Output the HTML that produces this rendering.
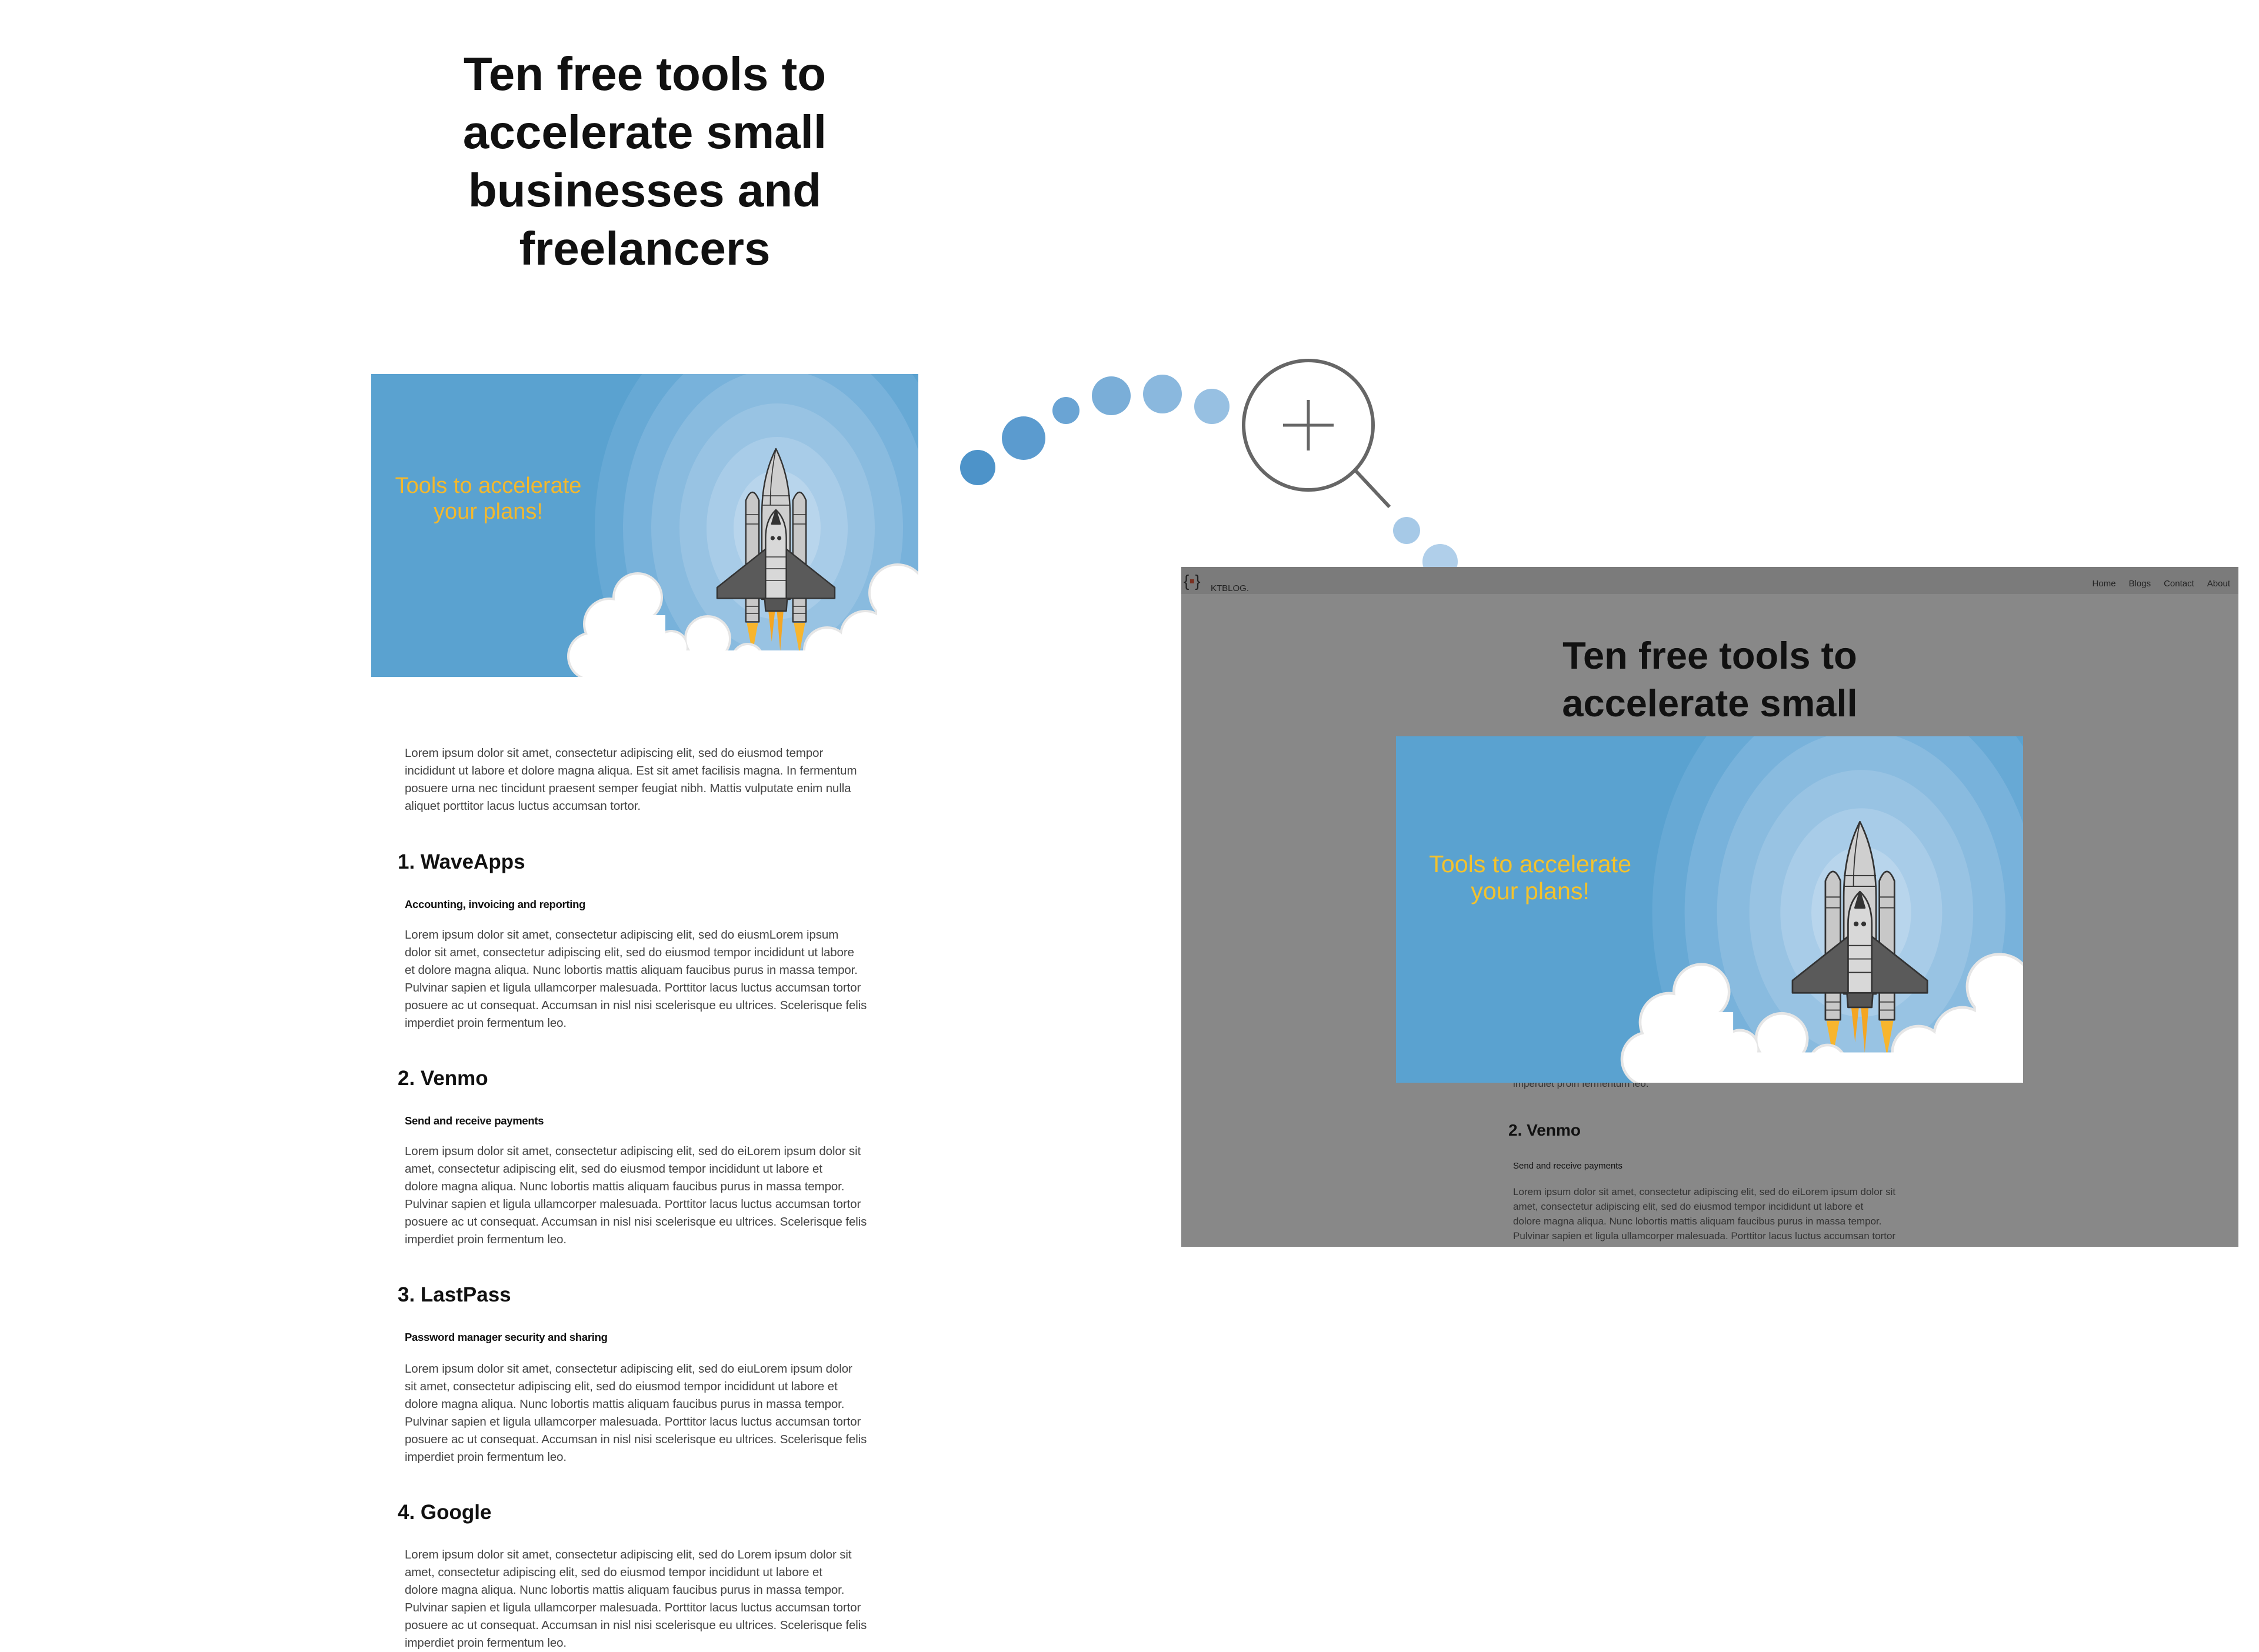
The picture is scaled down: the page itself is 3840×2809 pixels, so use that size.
<!DOCTYPE html>
<html><head><meta charset="utf-8">
<style>
html,body{margin:0;padding:0;background:#fff;}
body{width:3840px;height:2790px;position:relative;overflow:hidden;font-family:"Liberation Sans",sans-serif;}
.abs{position:absolute;}
.title{left:600px;width:992px;top:76px;text-align:center;font-weight:bold;font-size:80px;line-height:99px;color:#111;}
.p{position:absolute;left:688px;font-size:20.5px;line-height:30px;color:#444;white-space:nowrap;letter-spacing:-0.1px;}
.h{position:absolute;left:676px;font-size:35px;font-weight:bold;color:#111;line-height:40px;}
.s{position:absolute;left:688px;font-size:18.5px;color:#111;font-weight:bold;letter-spacing:-0.3px;}
</style></head><body>

<svg width="0" height="0" style="position:absolute">
<defs>
<symbol id="scene" viewBox="0 0 930 515">
<rect width="930" height="515" fill="#5aa2d0"/>
<g transform="translate(690,262)">
<ellipse rx="310" ry="390" fill="#67a9d5"/>
<ellipse rx="262" ry="330" fill="#78b2db"/>
<ellipse rx="214" ry="270" fill="#89bbdf"/>
<ellipse rx="166" ry="212" fill="#98c3e3"/>
<ellipse rx="120" ry="155" fill="#a8cce8"/>
<ellipse rx="74" ry="98" fill="#b8d5ec"/>
</g>
<g transform="translate(688,127) scale(0.8)" stroke="#333" stroke-width="3" stroke-linejoin="round">
<path d="M-16 345 L-9 410 L-2 345Z M2 345 L9 430 L16 345Z" fill="#f4a623" stroke="none"/>
<path d="M-62 370 L-50 435 L-38 370Z M38 370 L50 435 L62 370Z" fill="#f7b52d" stroke="none"/>
<path d="M-64 110 Q-50 75 -36 110 L-36 368 L-64 368Z" fill="#c8c8c8"/>
<path d="M36 110 Q50 75 64 110 L64 368 L36 368Z" fill="#c8c8c8"/>
<path d="M0 0 Q-30 60 -30 140 L-30 320 L30 320 L30 140 Q30 60 0 0Z" fill="#cfcfcf"/>
<path d="M0 0 Q-12 60 -12 120" fill="none" stroke-width="2"/>
<path d="M-18 210 L-125 295 L-125 318 L125 318 L125 295 L18 210Z" fill="#5a5a5a"/>
<path d="M0 130 Q-22 150 -22 190 L-22 330 L22 330 L22 190 Q22 150 0 130Z" fill="#d8d8d8"/>
<path d="M0 130 L-9 160 L9 160Z" fill="#333"/>
<path d="M-24 318 L-22 345 L22 345 L24 318Z" fill="#555"/>
<g stroke-width="2"><line x1="-30" y1="100" x2="30" y2="100"/><line x1="-30" y1="120" x2="30" y2="120"/><line x1="-64" y1="140" x2="-36" y2="140"/><line x1="36" y1="140" x2="64" y2="140"/><line x1="-64" y1="160" x2="-36" y2="160"/><line x1="36" y1="160" x2="64" y2="160"/><line x1="-22" y1="230" x2="22" y2="230"/><line x1="-22" y1="255" x2="22" y2="255"/><line x1="-22" y1="280" x2="22" y2="280"/><line x1="-64" y1="335" x2="-36" y2="335"/><line x1="36" y1="335" x2="64" y2="335"/><line x1="-64" y1="350" x2="-36" y2="350"/><line x1="36" y1="350" x2="64" y2="350"/></g>
<circle cx="-7" cy="190" r="3" fill="#333"/><circle cx="7" cy="190" r="3" fill="#333"/>
</g>
<g fill="#e6e6e6">
<circle cx="453" cy="380" r="43"/><circle cx="405" cy="425" r="45"/><circle cx="375" cy="480" r="42"/>
<circle cx="572" cy="450" r="40"/><circle cx="510" cy="465" r="30"/><circle cx="640" cy="485" r="28"/>
<circle cx="700" cy="500" r="28"/><circle cx="775" cy="470" r="41"/><circle cx="840" cy="445" r="44"/><circle cx="895" cy="372" r="50"/>
</g>
<g fill="#fff">
<circle cx="453" cy="380" r="39"/><circle cx="405" cy="425" r="41"/><circle cx="375" cy="480" r="38"/>
<circle cx="572" cy="450" r="36"/><circle cx="510" cy="465" r="26"/><circle cx="640" cy="485" r="24"/>
<circle cx="700" cy="500" r="24"/><circle cx="775" cy="470" r="37"/><circle cx="840" cy="445" r="40"/><circle cx="895" cy="372" r="46"/>
<rect x="370" y="470" width="560" height="45"/><rect x="400" y="410" width="100" height="70"/><rect x="860" y="372" width="70" height="110"/><rect x="800" y="440" width="80" height="40"/>
</g>
</symbol>
</defs>
</svg>

<div class="abs title">Ten free tools to<br>accelerate small<br>businesses and<br>freelancers</div>

<svg class="abs" style="left:631px;top:636px" width="930" height="515" viewBox="0 0 930 515">
<use href="#scene"/>
<text x="199" y="202" text-anchor="middle" font-family="Liberation Sans,sans-serif" font-size="38" fill="#f3b82d">Tools to accelerate</text>
<text x="199" y="246" text-anchor="middle" font-family="Liberation Sans,sans-serif" font-size="38" fill="#f3b82d">your plans!</text>
</svg>

<div class="p" style="top:1266px">Lorem ipsum dolor sit amet, consectetur adipiscing elit, sed do eiusmod tempor<br>incididunt ut labore et dolore magna aliqua. Est sit amet facilisis magna. In fermentum<br>posuere urna nec tincidunt praesent semper feugiat nibh. Mattis vulputate enim nulla<br>aliquet porttitor lacus luctus accumsan tortor.</div>

<div class="h" style="top:1446px">1. WaveApps</div>
<div class="s" style="top:1527px">Accounting, invoicing and reporting</div>
<div class="p" style="top:1575px">Lorem ipsum dolor sit amet, consectetur adipiscing elit, sed do eiusmLorem ipsum<br>dolor sit amet, consectetur adipiscing elit, sed do eiusmod tempor incididunt ut labore<br>et dolore magna aliqua. Nunc lobortis mattis aliquam faucibus purus in massa tempor.<br>Pulvinar sapien et ligula ullamcorper malesuada. Porttitor lacus luctus accumsan tortor<br>posuere ac ut consequat. Accumsan in nisl nisi scelerisque eu ultrices. Scelerisque felis<br>imperdiet proin fermentum leo.</div>

<div class="h" style="top:1814px">2. Venmo</div>
<div class="s" style="top:1895px">Send and receive payments</div>
<div class="p" style="top:1943px">Lorem ipsum dolor sit amet, consectetur adipiscing elit, sed do eiLorem ipsum dolor sit<br>amet, consectetur adipiscing elit, sed do eiusmod tempor incididunt ut labore et<br>dolore magna aliqua. Nunc lobortis mattis aliquam faucibus purus in massa tempor.<br>Pulvinar sapien et ligula ullamcorper malesuada. Porttitor lacus luctus accumsan tortor<br>posuere ac ut consequat. Accumsan in nisl nisi scelerisque eu ultrices. Scelerisque felis<br>imperdiet proin fermentum leo.</div>

<div class="h" style="top:2182px">3. LastPass</div>
<div class="s" style="top:2263px">Password manager security and sharing</div>
<div class="p" style="top:2313px">Lorem ipsum dolor sit amet, consectetur adipiscing elit, sed do eiuLorem ipsum dolor<br>sit amet, consectetur adipiscing elit, sed do eiusmod tempor incididunt ut labore et<br>dolore magna aliqua. Nunc lobortis mattis aliquam faucibus purus in massa tempor.<br>Pulvinar sapien et ligula ullamcorper malesuada. Porttitor lacus luctus accumsan tortor<br>posuere ac ut consequat. Accumsan in nisl nisi scelerisque eu ultrices. Scelerisque felis<br>imperdiet proin fermentum leo.</div>

<div class="h" style="top:2552px">4. Google</div>
<div class="p" style="top:2629px">Lorem ipsum dolor sit amet, consectetur adipiscing elit, sed do Lorem ipsum dolor sit<br>amet, consectetur adipiscing elit, sed do eiusmod tempor incididunt ut labore et<br>dolore magna aliqua. Nunc lobortis mattis aliquam faucibus purus in massa tempor.<br>Pulvinar sapien et ligula ullamcorper malesuada. Porttitor lacus luctus accumsan tortor<br>posuere ac ut consequat. Accumsan in nisl nisi scelerisque eu ultrices. Scelerisque felis<br>imperdiet proin fermentum leo.</div>

<svg class="abs" style="left:0;top:0" width="3840" height="1000">
<circle cx="1662" cy="795" r="30" fill="#4d93c9"/>
<circle cx="1740" cy="745" r="37" fill="#5b9bcf"/>
<circle cx="1812" cy="698" r="23" fill="#6aa4d4"/>
<circle cx="1889" cy="673" r="33" fill="#7aaed8"/>
<circle cx="1976" cy="670" r="33" fill="#8ab8de"/>
<circle cx="2060" cy="691" r="30" fill="#97c0e2"/>
<circle cx="2391" cy="902" r="23" fill="#a6c9e7"/>
<circle cx="2448" cy="955" r="30" fill="#b0cfea"/>
<circle cx="2224" cy="723" r="110" fill="none" stroke="#666" stroke-width="6"/>
<line x1="2224" y1="680" x2="2224" y2="766" stroke="#666" stroke-width="5"/>
<line x1="2181" y1="723" x2="2267" y2="723" stroke="#666" stroke-width="5"/>
<line x1="2304" y1="800" x2="2362" y2="862" stroke="#666" stroke-width="6"/>
</svg>

<div class="abs" style="left:2008px;top:964px;width:1797px;height:1156px;background:#888;overflow:hidden;">
  <div class="abs" style="left:0;top:0;width:1797px;height:46px;background:#7b7b7b;"></div>
  <div class="abs" style="left:4px;top:8px;font-size:28px;color:#222;">{<span style="color:#7a3020">▪</span>}</div>
  <div class="abs" style="left:50px;top:28px;font-size:15px;color:#222;">KTBLOG.</div>
  <div class="abs" style="right:14px;top:20px;font-size:15px;color:#222;">
    <span style="margin-right:22px">Home</span><span style="margin-right:22px">Blogs</span><span style="margin-right:22px">Contact</span><span>About</span></div>
  <div class="abs" style="left:0;width:1797px;top:110px;text-align:center;font-weight:bold;font-size:65px;line-height:81px;color:#111;">Ten free tools to<br>accelerate small</div>
  <div class="abs" style="left:564px;top:869px;font-size:17px;color:#333;">imperdiet proin fermentum leo.</div>
  <div class="abs" style="left:556px;top:942px;font-size:28px;font-weight:bold;color:#111;">2. Venmo</div>
  <div class="abs" style="left:564px;top:1010px;font-size:15px;color:#111;">Send and receive payments</div>
  <div class="abs" style="left:564px;top:1050px;font-size:17px;line-height:25px;color:#333;white-space:nowrap;">Lorem ipsum dolor sit amet, consectetur adipiscing elit, sed do eiLorem ipsum dolor sit<br>amet, consectetur adipiscing elit, sed do eiusmod tempor incididunt ut labore et<br>dolore magna aliqua. Nunc lobortis mattis aliquam faucibus purus in massa tempor.<br>Pulvinar sapien et ligula ullamcorper malesuada. Porttitor lacus luctus accumsan tortor<br>posuere ac ut consequat. Accumsan in nisl nisi scelerisque eu ultrices.</div>
  <svg class="abs" style="left:365px;top:288px" width="1066" height="589" viewBox="0 0 930 515" preserveAspectRatio="none">
    <use href="#scene"/>
    <text x="199" y="202" text-anchor="middle" font-family="Liberation Sans,sans-serif" font-size="36" fill="#f3c22d">Tools to accelerate</text>
    <text x="199" y="242" text-anchor="middle" font-family="Liberation Sans,sans-serif" font-size="36" fill="#f3c22d">your plans!</text>
  </svg>
</div>

</body></html>
